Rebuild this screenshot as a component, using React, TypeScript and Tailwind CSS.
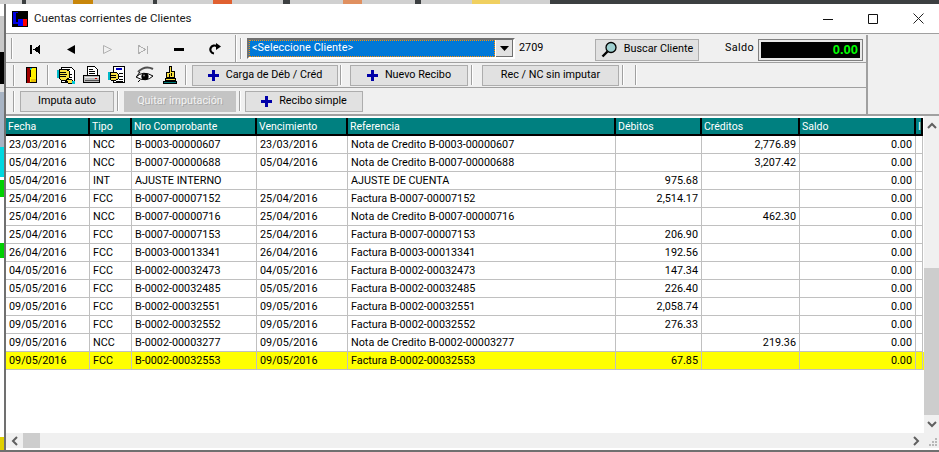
import type { ReactNode } from "react";

type Row = {
  fecha: string;
  tipo: string;
  nro: string;
  venc: string;
  ref: string;
  deb: string;
  cred: string;
  highlight?: boolean;
};

const rows: Row[] = [
  { fecha: "23/03/2016", tipo: "NCC", nro: "B-0003-00000607", venc: "23/03/2016", ref: "Nota de Credito B-0003-00000607", deb: "", cred: "2,776.89" },
  { fecha: "05/04/2016", tipo: "NCC", nro: "B-0007-00000688", venc: "05/04/2016", ref: "Nota de Credito B-0007-00000688", deb: "", cred: "3,207.42" },
  { fecha: "05/04/2016", tipo: "INT", nro: "AJUSTE INTERNO", venc: "", ref: "AJUSTE DE CUENTA", deb: "975.68", cred: "" },
  { fecha: "25/04/2016", tipo: "FCC", nro: "B-0007-00007152", venc: "25/04/2016", ref: "Factura B-0007-00007152", deb: "2,514.17", cred: "" },
  { fecha: "25/04/2016", tipo: "NCC", nro: "B-0007-00000716", venc: "25/04/2016", ref: "Nota de Credito B-0007-00000716", deb: "", cred: "462.30" },
  { fecha: "25/04/2016", tipo: "FCC", nro: "B-0007-00007153", venc: "25/04/2016", ref: "Factura B-0007-00007153", deb: "206.90", cred: "" },
  { fecha: "26/04/2016", tipo: "FCC", nro: "B-0003-00013341", venc: "26/04/2016", ref: "Factura B-0003-00013341", deb: "192.56", cred: "" },
  { fecha: "04/05/2016", tipo: "FCC", nro: "B-0002-00032473", venc: "04/05/2016", ref: "Factura B-0002-00032473", deb: "147.34", cred: "" },
  { fecha: "05/05/2016", tipo: "FCC", nro: "B-0002-00032485", venc: "05/05/2016", ref: "Factura B-0002-00032485", deb: "226.40", cred: "" },
  { fecha: "09/05/2016", tipo: "FCC", nro: "B-0002-00032551", venc: "09/05/2016", ref: "Factura B-0002-00032551", deb: "2,058.74", cred: "" },
  { fecha: "09/05/2016", tipo: "FCC", nro: "B-0002-00032552", venc: "09/05/2016", ref: "Factura B-0002-00032552", deb: "276.33", cred: "" },
  { fecha: "09/05/2016", tipo: "NCC", nro: "B-0002-00003277", venc: "09/05/2016", ref: "Nota de Credito B-0002-00003277", deb: "", cred: "219.36" },
  { fecha: "09/05/2016", tipo: "FCC", nro: "B-0002-00032553", venc: "09/05/2016", ref: "Factura B-0002-00032553", deb: "67.85", cred: "", highlight: true },
];

const headers = ["Fecha", "Tipo", "Nro Comprobante", "Vencimiento", "Referencia", "Débitos", "Créditos", "Saldo", "I"];
const gridCols = "grid grid-cols-[84px_42px_125px_91px_268px_86px_98px_116px_7px]";

function Grip() {
  return <div className="h-[21px] w-[2px] border-l border-[#a0a0a0] bg-white" />;
}

function Divider() {
  return <div className="h-[20px] w-[2px] border-l border-[#a0a0a0] bg-white" />;
}

function NavSlot({ children }: { children: ReactNode }) {
  return <div className="flex h-[22px] w-[36px] items-center justify-center pt-[1px]">{children}</div>;
}

function Plus() {
  return (
    <svg width="11" height="11" viewBox="0 0 11 11" shapeRendering="crispEdges">
      <path d="M4 0h3v4h4v3H7v4H4V7H0V4h4z" fill="#0000a8" />
    </svg>
  );
}

function Btn({ children, className }: { children: ReactNode; className: string }) {
  return (
    <div className={`flex h-[21px] items-center justify-center gap-[7px] border border-[#adadad] bg-[#e1e1e1] ${className}`}>
      {children}
    </div>
  );
}

function HandBase({ children }: { children: ReactNode }) {
  return (
    <svg width="18" height="18" viewBox="0 0 18 18" shapeRendering="crispEdges" className="block">
      {children}
    </svg>
  );
}

function DocHandIcon() {
  return (
    <HandBase>
      <path d="M4 1h10l3 3v12H4z" fill="#fff" stroke="#000" />
      <path d="M6 3h7M12 8h3M12 11h3M8 15h8" stroke="#000" />
      <path d="M0 4h2v8H0z" fill="#00b8c8" />
      <path d="M2 3h7l3 2v7l-3 2H4l-2-2z" fill="#f8e040" stroke="#000" />
      <path d="M3 6h6M3 8h7M3 10h6" stroke="#000" />
      <path d="M9 13h5l2 2v2H11z" fill="#f8e040" stroke="#000" />
      <path d="M15 15h3v3h-3z" fill="#00c8d8" />
    </HandBase>
  );
}

function PrinterIcon() {
  return (
    <HandBase>
      <path d="M4.5.5h7l3 3v6h-10z" fill="#fff" stroke="#000" />
      <path d="M6 3h4M6 5h6M6 7h6" stroke="#000" />
      <path d="M.5 9.5h16v7H.5z" fill="#b8b8b8" stroke="#000" />
      <path d="M2 14h14" stroke="#505050" />
      <path d="M2 11h14" stroke="#e8e8e8" />
      <path d="M12 12h2" stroke="#c00000" />
    </HandBase>
  );
}

function FormHandIcon() {
  return (
    <HandBase>
      <path d="M5.5.5h11v16h-11z" fill="#fff" stroke="#000" />
      <path d="M8 2h6v2H8z" fill="#0000c0" />
      <path d="M11 7h4M11 10h4M11 13h4M8 15h7" stroke="#000" />
      <path d="M0 6h2v8H0z" fill="#00b8c8" />
      <path d="M2 6h6l2 2v5l-2 1H3l-1-1z" fill="#f8e040" stroke="#000" />
      <path d="M3 9h5M3 11h5" stroke="#000" />
    </HandBase>
  );
}

function EyeIcon() {
  return (
    <svg width="18" height="18" viewBox="0 0 18 18" className="block">
      <path d="M2 6Q9-1 17 3" fill="none" stroke="#505050" strokeWidth="2" />
      <path d="M0 11Q7 4 17 10Q10 17 0 11z" fill="#fff" stroke="#000" />
      <circle cx="9" cy="10.5" r="3.6" fill="#000" />
      <circle cx="8" cy="9.5" r="1" fill="#808080" />
      <path d="M1 10L4 6M4 14l-2 2" stroke="#000" fill="none" />
    </svg>
  );
}

function PointingIcon() {
  return (
    <HandBase>
      <path d="M8.5.5h2v5h3v6h-8V6h3z" fill="#f8e040" stroke="#000" />
      <path d="M10 7v3M8 8v3" stroke="#000" />
      <path d="M4 12h10v2H4z" fill="#f8e040" stroke="#000" />
      <path d="M2 15h13v2H2z" fill="#007878" stroke="#000" />
    </HandBase>
  );
}

function DoorIcon() {
  return (
    <svg width="12" height="17" viewBox="0 0 12 17" shapeRendering="crispEdges" className="block">
      <path d="M.5.5h10v15H.5z" fill="#fff000" stroke="#000" />
      <path d="M1 1h3v15H1z" fill="#a00000" />
      <path d="M4 1h3L4 3z" fill="#00b0c0" />
      <path d="M4 3h1v7H4z" fill="#000" />
      <path d="M5 12h5v3H5z" fill="#e8c000" />
    </svg>
  );
}

function Magnifier() {
  return (
    <svg width="16" height="17" viewBox="0 0 16 17" className="block">
      <circle cx="10" cy="6.5" r="5" fill="#9fd0d0" stroke="#000" strokeWidth="1.3" />
      <path d="M6.5 10.5L1.5 15.5" stroke="#000" strokeWidth="2.4" />
    </svg>
  );
}

function Chevron({ dir }: { dir: "up" | "down" | "left" | "right" }) {
  const d = {
    up: "M1 6l4-4 4 4",
    down: "M1 2l4 4 4-4",
    left: "M6 1L2 5l4 4",
    right: "M2 1l4 4-4 4",
  }[dir];
  const w = dir === "up" || dir === "down" ? 10 : 8;
  const h = dir === "up" || dir === "down" ? 8 : 10;
  return (
    <svg width={w} height={h} viewBox={`0 0 ${w} ${h}`}>
      <path d={d} fill="none" stroke="#606060" strokeWidth="2" />
    </svg>
  );
}

function Cell({ children, right }: { children?: ReactNode; right?: boolean }) {
  return (
    <div className={`h-[18px] overflow-hidden whitespace-nowrap border-r border-b border-[#c0c0c0] px-[3px] leading-[18px] ${right ? "text-right" : ""}`}>
      {children}
    </div>
  );
}

export default function App() {
  return (
    <div className="flex h-[452px] w-[939px] flex-col overflow-hidden bg-[#707070] font-['Roboto',Arial,sans-serif] text-[10.8px] text-black">
      {/* ventanas de atras */}
      <div className="flex h-[4px] shrink-0 bg-[#3c3f41]">
        <div className="h-full w-[22px] bg-[#d0d0d0]" />
        <div className="ml-[4px] h-full w-[127px] bg-[#d0d0d0] pl-[47px]"><div className="h-full w-[20px] bg-[#c8860a]" /></div>
        <div className="ml-[4px] h-full w-[126px] bg-[#d0d0d0] pl-[56px]"><div className="h-full w-[19px] bg-[#e06030]" /></div>
        <div className="ml-[7px] h-full w-[125px] bg-[#d0d0d0] pl-[53px]"><div className="h-full w-[19px] bg-[#e09060]" /></div>
        <div className="ml-[6px] h-full w-[129px] bg-[#d0d0d0] pl-[51px]"><div className="h-full w-[28px] bg-[#f0d060]" /></div>
      </div>

      <div className="flex h-[446px] shrink-0">
        <div className="flex w-[4px] shrink-0 flex-col bg-[#e8e8e8]">
          <div className="h-[12px] bg-white" />
          <div className="h-[36px] bg-[#c8c8c8]" />
          <div className="h-[32px] bg-black" />
          <div className="h-[8px] bg-[#e0e0e0]" />
          <div className="h-[55px] bg-[#a8b4c4]" />
          <div className="h-[30px] bg-[#00d8e0]" />
          <div className="h-[3px] bg-white" />
          <div className="h-[17px] bg-[#00d000]" />
          <div className="h-[46px] bg-white" />
          <div className="h-[15px] bg-[#00d000]" />
          <div className="h-[179px] bg-white" />
          <div className="h-[13px] bg-[#e0d000]" />
        </div>

        {/* ventana */}
        <div className="flex w-[935px] shrink-0 flex-col border-l-2 border-[#707070] bg-white">
          {/* titulo */}
          <div className="flex h-[30px] shrink-0 items-center border-b border-[#a0a0a0] bg-white">
            <svg className="ml-[6px]" width="16" height="16" viewBox="0 0 16 16" shapeRendering="crispEdges">
              <path d="M0 0h16v16H0z" fill="#000" />
              <path d="M1 1h5v12H1z" fill="#0000e0" />
              <path d="M4 2h9v5H9v4H4z" fill="#000" />
              <path d="M6 8h6v7H6z" fill="#0000ff" />
              <path d="M11 8h4v7h-4z" fill="#ff0000" />
            </svg>
            <span className="ml-[6px] text-[11.5px] tracking-[0.05px] text-[#202020]">Cuentas corrientes de Clientes</span>
            <div className="ml-auto flex items-center">
              <svg width="10" height="10" viewBox="0 0 10 10" className="mr-[35px]"><path d="M0 5.5h10" stroke="#111" /></svg>
              <svg width="10" height="10" viewBox="0 0 10 10" className="mr-[35px]"><path d="M.5.5h9v9h-9z" fill="none" stroke="#111" /></svg>
              <svg width="11" height="11" viewBox="0 0 11 11" className="mr-[15px]"><path d="M.5.5l10 10M10.5.5l-10 10" stroke="#222" /></svg>
            </div>
          </div>

          {/* barras */}
          <div className="flex h-[80px] shrink-0 bg-[#f0f0f0] pt-[1px]">
            <div className="flex w-[862px] shrink-0 flex-col border-r-2 border-[#a0a0a0]">
              <div className="flex h-[28px] shrink-0 items-center border-b border-[#a0a0a0]">
                <div className="ml-[5px]"><Grip /></div>
                <div className="ml-[4px] flex">
                  <NavSlot>
                    <svg width="11" height="9" viewBox="0 0 11 9" shapeRendering="crispEdges"><path d="M0 0h2v9H0zM10 0v9L3 4.5z" fill="#000" /></svg>
                  </NavSlot>
                  <NavSlot>
                    <svg width="8" height="9" viewBox="0 0 8 9"><path d="M8 0v9L0 4.5z" fill="#000" /></svg>
                  </NavSlot>
                  <NavSlot>
                    <svg width="9" height="9" viewBox="0 0 9 9"><path d="M.5.5v8l8-4z" fill="#f0f0f0" stroke="#b0b0b0" /></svg>
                  </NavSlot>
                  <NavSlot>
                    <svg width="11" height="9" viewBox="0 0 11 9" shapeRendering="crispEdges"><path d="M.5.5v8l7-4zM9.5.5v8" fill="none" stroke="#b0b0b0" /></svg>
                  </NavSlot>
                  <NavSlot>
                    <div className="h-[3px] w-[10px] bg-black" />
                  </NavSlot>
                  <NavSlot>
                    <svg width="12" height="12" viewBox="0 0 12 12"><path d="M8 3.5A4 4 0 1 0 5 10.5" fill="none" stroke="#000" strokeWidth="2.2" /><path d="M7 0l5 3.5L7 7z" fill="#000" /></svg>
                  </NavSlot>
                </div>
                <div className="ml-[2px] h-full w-[2px] border-l border-[#a0a0a0] bg-white" />
                <div className="ml-[3px]"><Grip /></div>
                {/* combo */}
                <div className="ml-[5px] flex h-[21px] w-[268px] items-stretch border-2 border-t-[#707070] border-l-[#707070] border-r-white border-b-white bg-white">
                  <div className="flex flex-1 items-center border border-dotted border-[#ff9000] bg-[#0078d7] pl-[2px] tracking-[0.1px] text-white">&lt;Seleccione Cliente&gt;</div>
                  <div className="ml-[1px] flex w-[17px] items-center justify-center border-r border-b border-[#707070] bg-[#e1e1e1]">
                    <svg width="9" height="5" viewBox="0 0 9 5"><path d="M0 0h9L4.5 5z" fill="#000" /></svg>
                  </div>
                </div>
                <span className="ml-[4px] w-[76px]">2709</span>
                <Btn className="mt-[2px] h-[22px] w-[104px] gap-[5px]">
                  <Magnifier />
                  <span>Buscar Cliente</span>
                </Btn>
                <span className="ml-[26px] w-[33px] tracking-[0.4px]">Saldo</span>
                <div className="ml-[1px] mt-[2px] flex h-[20px] w-[103px] items-center justify-end border-2 border-[#e8e8e8] bg-black pr-[2px] outline outline-[#808080]">
                  <span className="font-['Liberation_Sans',sans-serif] text-[13px] font-bold text-[#00ff00]">0.00</span>
                </div>
              </div>

              <div className="flex h-[25px] shrink-0 items-center border-b border-[#a0a0a0]">
                <div className="ml-[7px]"><Grip /></div>
                <div className="ml-[11px]"><DoorIcon /></div>
                <div className="ml-[9px]"><Divider /></div>
                <div className="ml-[8px]"><DocHandIcon /></div>
                <div className="ml-[8px]"><PrinterIcon /></div>
                <div className="ml-[7px]"><FormHandIcon /></div>
                <div className="ml-[10px]"><EyeIcon /></div>
                <div className="ml-[7px]"><PointingIcon /></div>
                <div className="ml-[6px]"><Divider /></div>
                <Btn className="ml-[5px] w-[146px]">
                  <Plus />
                  <span>Carga de Déb / Créd</span>
                </Btn>
                <div className="ml-[2px]"><Divider /></div>
                <Btn className="ml-[8px] w-[118px]">
                  <Plus />
                  <span>Nuevo Recibo</span>
                </Btn>
                <div className="ml-[3px]"><Divider /></div>
                <Btn className="ml-[9px] w-[137px]">
                  <span>Rec / NC sin imputar</span>
                </Btn>
                <div className="ml-[3px]"><Divider /></div>
                <div className="ml-[11px]"><Divider /></div>
              </div>

              <div className="flex h-[26px] shrink-0 items-center">
                <div className="ml-[7px]"><Grip /></div>
                <Btn className="ml-[5px] w-[94px]"><span>Imputa auto</span></Btn>
                <div className="ml-[3px]"><Divider /></div>
                <div className="ml-[5px] flex h-[21px] w-[112px] items-center justify-center bg-[#c4c4c4] text-[#f4f4f4] [text-shadow:1px_1px_0_#a8a8a8]">Quitar imputación</div>
                <div className="ml-[3px]"><Divider /></div>
                <Btn className="ml-[4px] w-[118px]">
                  <Plus />
                  <span>Recibo simple</span>
                </Btn>
              </div>
            </div>
          </div>

          {/* grilla */}
          <div className="flex h-[334px] shrink-0 border-t-2 border-[#a0a0a0] bg-white">
            <div className="flex w-[918px] shrink-0 flex-col pt-[2px]">
              <div className="flex flex-1 flex-col">
                <div className={`${gridCols} h-[18px] shrink-0`}>
                  {headers.map((h) => (
                    <div key={h} className="overflow-hidden whitespace-nowrap border-r-2 border-b-2 border-r-black border-b-black bg-[#008080] pl-[2px] text-[10.5px] leading-[17px] text-white">
                      {h}
                    </div>
                  ))}
                </div>
                {rows.map((r) => (
                  <div key={r.nro} className={`${gridCols} h-[18px] shrink-0 ${r.highlight ? "bg-[#ffff00]" : "bg-white"}`}>
                    <Cell>{r.fecha}</Cell>
                    <Cell>{r.tipo}</Cell>
                    <Cell>{r.nro}</Cell>
                    <Cell>{r.venc}</Cell>
                    <Cell>{r.ref}</Cell>
                    <Cell right>{r.deb}</Cell>
                    <Cell right>{r.cred}</Cell>
                    <Cell right>0.00</Cell>
                    <Cell />
                  </div>
                ))}
              </div>
              {/* scroll horizontal */}
              <div className="flex h-[15px] shrink-0 items-center bg-[#f0f0f0]">
                <div className="flex w-[17px] items-center justify-center"><Chevron dir="left" /></div>
                <div className="h-full w-[17px] bg-[#cdcdcd]" />
                <div className="ml-auto flex w-[17px] items-center justify-center"><Chevron dir="right" /></div>
              </div>
            </div>

            {/* scroll vertical */}
            <div className="flex w-[15px] shrink-0 flex-col bg-[#f0f0f0]">
              <div className="flex h-[20px] shrink-0 items-center justify-center"><Chevron dir="up" /></div>
              <div className="h-[132px] shrink-0" />
              <div className="h-[147px] shrink-0 bg-[#cdcdcd]" />
              <div className="flex h-[18px] shrink-0 items-center justify-center"><Chevron dir="down" /></div>
              <div className="flex flex-1 items-end justify-end p-[1px]">
                <svg width="9" height="9" viewBox="0 0 9 9" shapeRendering="crispEdges"><path d="M6 0h2v2H6zM3 3h2v2H3zM6 3h2v2H6zM0 6h2v2H0zM3 6h2v2H3zM6 6h2v2H6z" fill="#b8b8b8" /></svg>
              </div>
            </div>
          </div>
          <div className="flex-1 bg-white" />
        </div>
      </div>
    </div>
  );
}
